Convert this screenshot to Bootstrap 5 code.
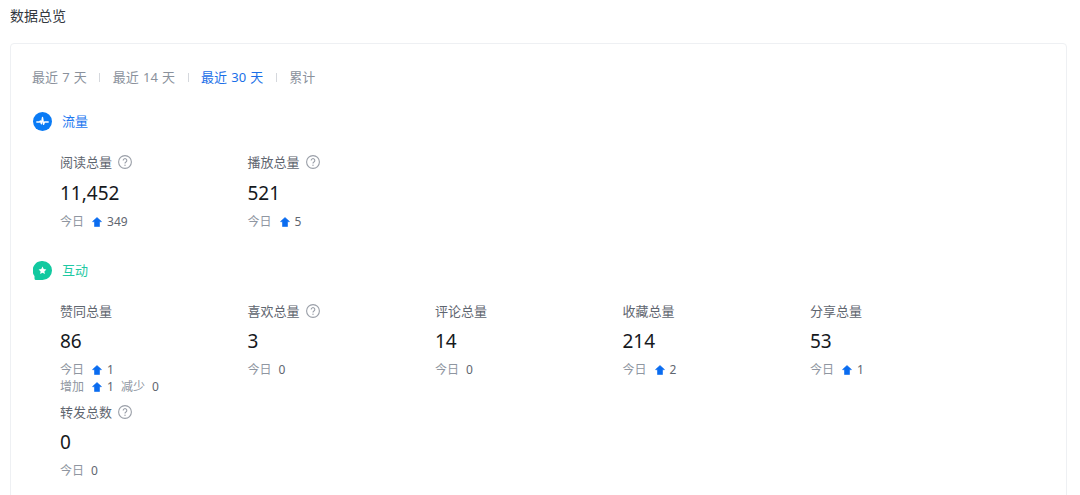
<!DOCTYPE html>
<html lang="zh-CN">
<head>
<meta charset="utf-8">
<title>数据总览</title>
<link rel="stylesheet" href="https://cdn.jsdelivr.net/npm/bootstrap@5.3.0/dist/css/bootstrap.min.css">
<style>
html,body{height:495px;overflow:hidden;background:#fff}
body{font-family:"Noto Sans","Noto Sans CJK SC",sans-serif;font-size:13px;color:#33383e}
.page-title{padding:7px 0 0 10px;height:43px;line-height:18px;font-size:14px;color:#33383e;margin:0;font-weight:400;width:max-content}
.panel{margin:0 13px 0 10px;border:1px solid #eef0f3;border-radius:4px;height:470px;padding:23px 21px 0}
.range-bar{height:20px;line-height:20px;color:#8a919c;gap:12.5px;word-spacing:.8px}
.range-bar .on{color:#1a6fe8}
.range-sep{width:1px;height:9px;background:#d5d8dd}
.sec-head{gap:10px;line-height:20px}
.sec-a{margin-top:24px;color:#1e78f0}
.sec-b{margin-top:0;color:#1fc9a3}
.sec-ico{width:19px;height:19px;display:block;margin-left:1px}
.metrics{margin-left:28px;display:grid;grid-template-columns:repeat(5,187.5px)}
.metrics-a{padding-top:21px;height:129px}
.metrics-b{padding-top:21px}
.m-label{height:20px;line-height:20px;color:#5f6670;gap:6px}
.m-value{height:28px;line-height:28px;margin-top:7px;font-size:19px;color:#16191d}
.metrics-b .m-value{margin-top:6px}
.m-sub{height:17px;line-height:17px;margin-top:6px;color:#8f96a1;font-size:12px}
.m-sub+.m-sub{margin-top:0}
.m-sub b{font-weight:400;color:#5f6670}
.m-cell{height:101px}
.q-ico{width:14px;height:14px;display:block}
.up-ico{width:10px;height:10px;display:block;margin:0 5px 0 8px}
.num-0{margin-left:7px}
.gap-w{margin-left:7px}
</style>
</head>
<body>
<h1 class="page-title">数据总览</h1>
<div class="panel">
  <div class="range-bar d-flex align-items-center">
    <span>最近 7 天</span><i class="range-sep"></i>
    <span>最近 14 天</span><i class="range-sep"></i>
    <span class="on">最近 30 天</span><i class="range-sep"></i>
    <span>累计</span>
  </div>
  <div class="sec-head sec-a d-flex align-items-center">
    <svg class="sec-ico" viewBox="0 0 19 19"><circle cx="9.5" cy="9.5" r="9.5" fill="#0a7bf5"/><path d="M3.8 10h2.6l1 -1 1 2.8 1.1-6.3 1.1 6.8.9-2.3h3.7" fill="none" stroke="#fff" stroke-width="1.4" stroke-linejoin="round" stroke-linecap="round"/></svg>
    <span>流量</span>
  </div>
  <div class="metrics metrics-a">
    <div>
      <div class="m-label d-flex align-items-center">阅读总量<svg class="q-ico" viewBox="0 0 14 14"><circle cx="7" cy="7" r="6.4" fill="none" stroke="#9a9fa8" stroke-width="1.1"/><path d="M5.2 5.4a1.8 1.8 0 1 1 2.7 1.6c-.6.35-.9.7-.9 1.4" fill="none" stroke="#9a9fa8" stroke-width="1.1"/><circle cx="7" cy="10.3" r=".7" fill="#9a9fa8"/></svg></div>
      <div class="m-value">11,452</div>
      <div class="m-sub d-flex align-items-center">今日<svg class="up-ico" viewBox="0 0 10 10"><path d="M5 .5 9.5 4.6 7.5 4.8V9.5H2.5V4.8L.5 4.6Z" fill="#0a6cf0" stroke="#0a6cf0" stroke-width=".6" stroke-linejoin="round"/></svg><b>349</b></div>
    </div>
    <div>
      <div class="m-label d-flex align-items-center">播放总量<svg class="q-ico" viewBox="0 0 14 14"><circle cx="7" cy="7" r="6.4" fill="none" stroke="#9a9fa8" stroke-width="1.1"/><path d="M5.2 5.4a1.8 1.8 0 1 1 2.7 1.6c-.6.35-.9.7-.9 1.4" fill="none" stroke="#9a9fa8" stroke-width="1.1"/><circle cx="7" cy="10.3" r=".7" fill="#9a9fa8"/></svg></div>
      <div class="m-value">521</div>
      <div class="m-sub d-flex align-items-center">今日<svg class="up-ico" viewBox="0 0 10 10"><path d="M5 .5 9.5 4.6 7.5 4.8V9.5H2.5V4.8L.5 4.6Z" fill="#0a6cf0" stroke="#0a6cf0" stroke-width=".6" stroke-linejoin="round"/></svg><b>5</b></div>
    </div>
  </div>
  <div class="sec-head sec-b d-flex align-items-center">
    <svg class="sec-ico" viewBox="0 0 19 19"><path d="M9.5 0a9.5 9.5 0 1 1 0 19H3a1.5 1.5 0 0 1-1.5-1.5v-2.4A9.5 9.5 0 0 1 9.5 0Z" fill="#12c9a0"/><path d="M9.5 5.6l1.2 2.5 2.7.4-2 1.9.5 2.7-2.4-1.3-2.4 1.3.5-2.7-2-1.9 2.7-.4Z" fill="#fff"/></svg>
    <span>互动</span>
  </div>
  <div class="metrics metrics-b">
    <div class="m-cell">
      <div class="m-label d-flex align-items-center">赞同总量</div>
      <div class="m-value">86</div>
      <div class="m-sub d-flex align-items-center">今日<svg class="up-ico" viewBox="0 0 10 10"><path d="M5 .5 9.5 4.6 7.5 4.8V9.5H2.5V4.8L.5 4.6Z" fill="#0a6cf0" stroke="#0a6cf0" stroke-width=".6" stroke-linejoin="round"/></svg><b>1</b></div>
      <div class="m-sub d-flex align-items-center">增加<svg class="up-ico" viewBox="0 0 10 10"><path d="M5 .5 9.5 4.6 7.5 4.8V9.5H2.5V4.8L.5 4.6Z" fill="#0a6cf0" stroke="#0a6cf0" stroke-width=".6" stroke-linejoin="round"/></svg><b>1</b><span class="gap-w">减少</span><b class="num-0">0</b></div>
    </div>
    <div>
      <div class="m-label d-flex align-items-center">喜欢总量<svg class="q-ico" viewBox="0 0 14 14"><circle cx="7" cy="7" r="6.4" fill="none" stroke="#9a9fa8" stroke-width="1.1"/><path d="M5.2 5.4a1.8 1.8 0 1 1 2.7 1.6c-.6.35-.9.7-.9 1.4" fill="none" stroke="#9a9fa8" stroke-width="1.1"/><circle cx="7" cy="10.3" r=".7" fill="#9a9fa8"/></svg></div>
      <div class="m-value">3</div>
      <div class="m-sub d-flex align-items-center">今日<b class="num-0">0</b></div>
    </div>
    <div>
      <div class="m-label d-flex align-items-center">评论总量</div>
      <div class="m-value">14</div>
      <div class="m-sub d-flex align-items-center">今日<b class="num-0">0</b></div>
    </div>
    <div>
      <div class="m-label d-flex align-items-center">收藏总量</div>
      <div class="m-value">214</div>
      <div class="m-sub d-flex align-items-center">今日<svg class="up-ico" viewBox="0 0 10 10"><path d="M5 .5 9.5 4.6 7.5 4.8V9.5H2.5V4.8L.5 4.6Z" fill="#0a6cf0" stroke="#0a6cf0" stroke-width=".6" stroke-linejoin="round"/></svg><b>2</b></div>
    </div>
    <div>
      <div class="m-label d-flex align-items-center">分享总量</div>
      <div class="m-value">53</div>
      <div class="m-sub d-flex align-items-center">今日<svg class="up-ico" viewBox="0 0 10 10"><path d="M5 .5 9.5 4.6 7.5 4.8V9.5H2.5V4.8L.5 4.6Z" fill="#0a6cf0" stroke="#0a6cf0" stroke-width=".6" stroke-linejoin="round"/></svg><b>1</b></div>
    </div>
    <div>
      <div class="m-label d-flex align-items-center">转发总数<svg class="q-ico" viewBox="0 0 14 14"><circle cx="7" cy="7" r="6.4" fill="none" stroke="#9a9fa8" stroke-width="1.1"/><path d="M5.2 5.4a1.8 1.8 0 1 1 2.7 1.6c-.6.35-.9.7-.9 1.4" fill="none" stroke="#9a9fa8" stroke-width="1.1"/><circle cx="7" cy="10.3" r=".7" fill="#9a9fa8"/></svg></div>
      <div class="m-value">0</div>
      <div class="m-sub d-flex align-items-center">今日<b class="num-0">0</b></div>
    </div>
  </div>
</div>
<script src="https://cdn.jsdelivr.net/npm/bootstrap@5.3.0/dist/js/bootstrap.bundle.min.js"></script>
</body>
</html>
